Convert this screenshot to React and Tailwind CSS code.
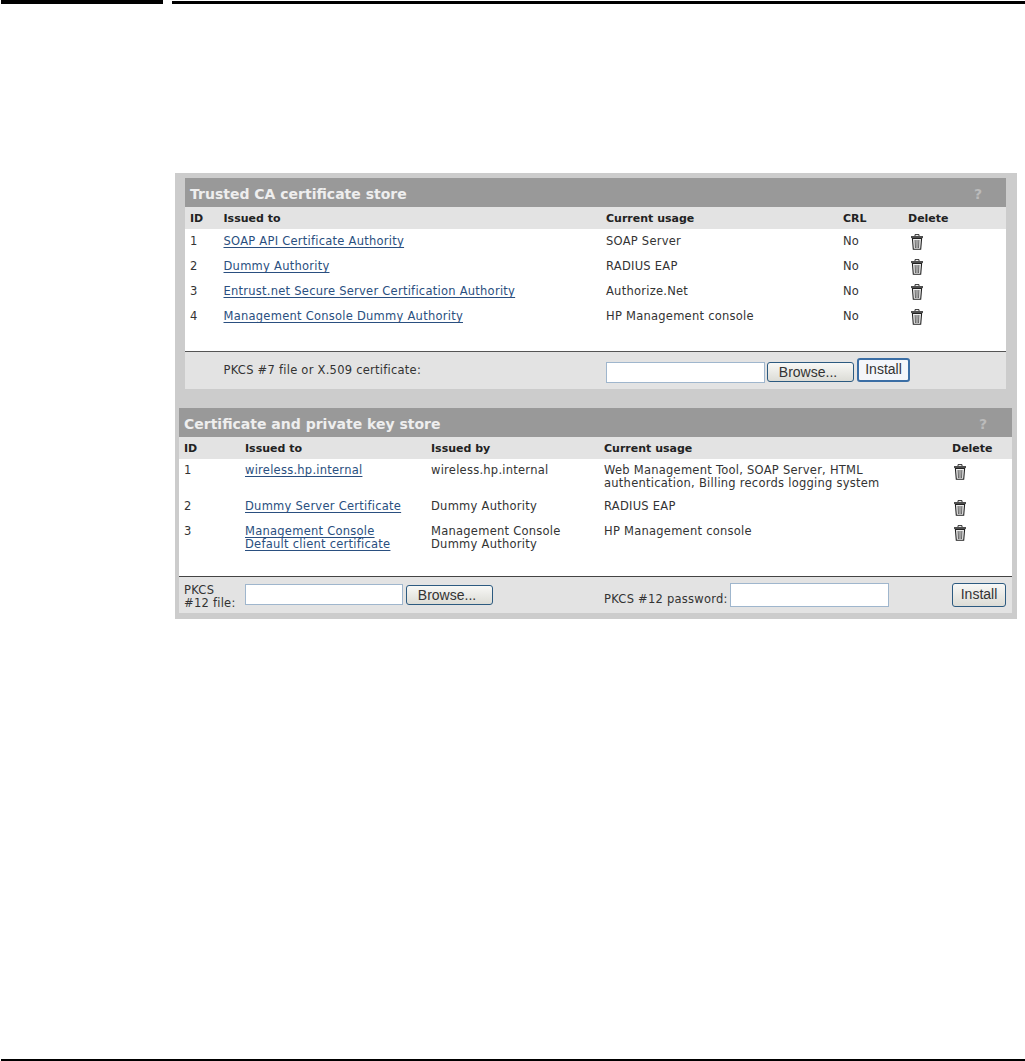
import React from 'react';

const TrashIcon = () => (
    <svg width="14" height="16" viewBox="0 0 14 16" className="block">
        <path d="M5 2 V0.6 H9 V2" fill="none" stroke="#333" strokeWidth="1" />
        <path d="M1 3 H13" stroke="#222" strokeWidth="1.6" />
        <path d="M2.4 4.5 L3.3 15.2 H10.7 L11.6 4.5 Z" fill="#eeeeee" stroke="#222" strokeWidth="1.1" />
        <path d="M5.1 6 L5.4 14 M7 6 V14 M8.9 6 L8.6 14" stroke="#555" strokeWidth="1" />
    </svg>
);

const Panel = ({ title, helpClass, children }) => (
    <section>
        <div className="h-[29px] bg-[#999999] flex items-center justify-between pt-[3px] text-[14px] tracking-normal font-bold text-[#eeeeee]">
            <span className="pl-[5px]">{title}</span>
            <span className={`text-[#bbbbbb] ${helpClass}`}>?</span>
        </div>
        {children}
    </section>
);

const Link = ({ children }) => (
    <a href="#" className="text-[#2a4f80] underline underline-offset-2">{children}</a>
);

const trustedRows = [
    ['1', 'SOAP API Certificate Authority', 'SOAP Server'],
    ['2', 'Dummy Authority', 'RADIUS EAP'],
    ['3', 'Entrust.net Secure Server Certification Authority', 'Authorize.Net'],
    ['4', 'Management Console Dummy Authority', 'HP Management console'],
];

const keyRows = [
    {
        id: '1',
        to: ['wireless.hp.internal'],
        by: ['wireless.hp.internal'],
        usage: ['Web Management Tool, SOAP Server, HTML', 'authentication, Billing records logging system'],
        h: 'h-[36px]',
    },
    { id: '2', to: ['Dummy Server Certificate'], by: ['Dummy Authority'], usage: ['RADIUS EAP'], h: 'h-[25px]' },
    {
        id: '3',
        to: ['Management Console', 'Default client certificate'],
        by: ['Management Console', 'Dummy Authority'],
        usage: ['HP Management console'],
        h: 'h-[56px]',
    },
];

const trustedGrid = 'grid grid-cols-[33.5px_382.5px_237px_65px_1fr] pl-[5px]';
const keyGrid = 'grid grid-cols-[61px_186px_173px_348px_1fr] pl-[5px]';
const headCell = 'h-[22px] bg-[#e3e3e3] items-center text-[11px] tracking-normal font-bold text-[#222]';

const Input = ({ w, h = 'h-[21px]' }) => (
    <span className={`block bg-white border border-[#9fb6cd] ${w} ${h}`} />
);

const BrowseBtn = () => (
    <button className="w-[87px] h-[20px] pr-[5px] rounded-[3px] border border-[#2c5a80] bg-gradient-to-b from-[#f8f8f6] to-[#dcdcd6] text-[14px] leading-none tracking-normal text-[#333] font-['Liberation_Sans',sans-serif]">
        Browse...
    </button>
);

const InstallBtn = ({ w, strong }) => (
    <button
        className={`${w} h-[24px] pb-[3px] rounded-[3px] text-[14px] leading-none tracking-normal text-[#333] font-['Liberation_Sans',sans-serif] ${strong ? 'border-2 border-[#3b6ea5] bg-[#f4f6fa]' : 'border border-[#2c5a80] bg-gradient-to-b from-[#f8f8f6] to-[#dcdcd6]'}`}
    >
        Install
    </button>
);

export default function App() {
    return (
        <div className="w-[1025px] h-[1061px] bg-white flex flex-col font-['DejaVu_Sans',Verdana,sans-serif] text-[11.5px] tracking-[0.25px] leading-[13px] text-[#333333]">
            <div className="flex gap-[9px] pl-px items-start">
                <div className="w-[162px] h-[4px] bg-black" />
                <div className="flex-1 h-[3px] mt-px bg-black" />
            </div>

            <div className="ml-[175px] mt-[169px] w-[842px] h-[446px] bg-[#cccccc] pt-[5px] flex flex-col">
                <div className="ml-[10px] mr-[11px]">
                    <Panel title="Trusted CA certificate store" helpClass="pr-[24px]">
                        <div className={`${trustedGrid} ${headCell}`}>
                            <span>ID</span>
                            <span>Issued to</span>
                            <span>Current usage</span>
                            <span>CRL</span>
                            <span>Delete</span>
                        </div>
                        <div className="bg-white h-[122px]">
                            {trustedRows.map((r) => (
                                <div key={r[0]} className={`${trustedGrid} h-[25px] items-center`}>
                                    <span>{r[0]}</span>
                                    <span><Link>{r[1]}</Link></span>
                                    <span>{r[2]}</span>
                                    <span>No</span>
                                    <span className="pl-[2px] pt-px"><TrashIcon /></span>
                                </div>
                            ))}
                        </div>
                        <div className="h-[38px] bg-[#e3e3e3] border-t border-[#555555] flex items-end pb-[6px] pl-[38.5px]">
                            <span className="w-[382.5px] pb-[6px]">PKCS #7 file or X.509 certificate:</span>
                            <Input w="w-[159px]" />
                            <span className="ml-[2px] mb-px"><BrowseBtn /></span>
                            <span className="ml-[3px] mb-px"><InstallBtn w="w-[53px]" strong /></span>
                        </div>
                    </Panel>
                </div>

                <div className="ml-[4px] mr-[5px] mt-[19px]">
                    <Panel title="Certificate and private key store" helpClass="pr-[25px]">
                        <div className={`${keyGrid} ${headCell}`}>
                            <span>ID</span>
                            <span>Issued to</span>
                            <span>Issued by</span>
                            <span>Current usage</span>
                            <span>Delete</span>
                        </div>
                        <div className="bg-white h-[117px]">
                            {keyRows.map((r) => (
                                <div key={r.id} className={`${keyGrid} ${r.h} pt-[5px]`}>
                                    <span>{r.id}</span>
                                    <span>{r.to.map((t) => <span key={t} className="block"><Link>{t}</Link></span>)}</span>
                                    <span>{r.by.map((t) => <span key={t} className="block">{t}</span>)}</span>
                                    <span>{r.usage.map((t) => <span key={t} className="block">{t}</span>)}</span>
                                    <span className="pl-px"><TrashIcon /></span>
                                </div>
                            ))}
                        </div>
                        <div className="h-[37px] bg-[#e3e3e3] border-t border-[#444444] flex items-center pl-[5px]">
                            <span className="w-[61px] pt-[4px]">PKCS<br />#12 file:</span>
                            <span className="mb-[2px]"><Input w="w-[158px]" /></span>
                            <span className="ml-[3px]"><BrowseBtn /></span>
                            <span className="ml-[111px] w-[126px] pt-[9px]">PKCS #12 password:</span>
                            <Input w="w-[159px]" h="h-[24px]" />
                            <span className="ml-[63px]"><InstallBtn w="w-[54px]" /></span>
                        </div>
                    </Panel>
                </div>
            </div>

            <div className="mt-auto ml-px h-[2px] bg-black" />
        </div>
    );
}
